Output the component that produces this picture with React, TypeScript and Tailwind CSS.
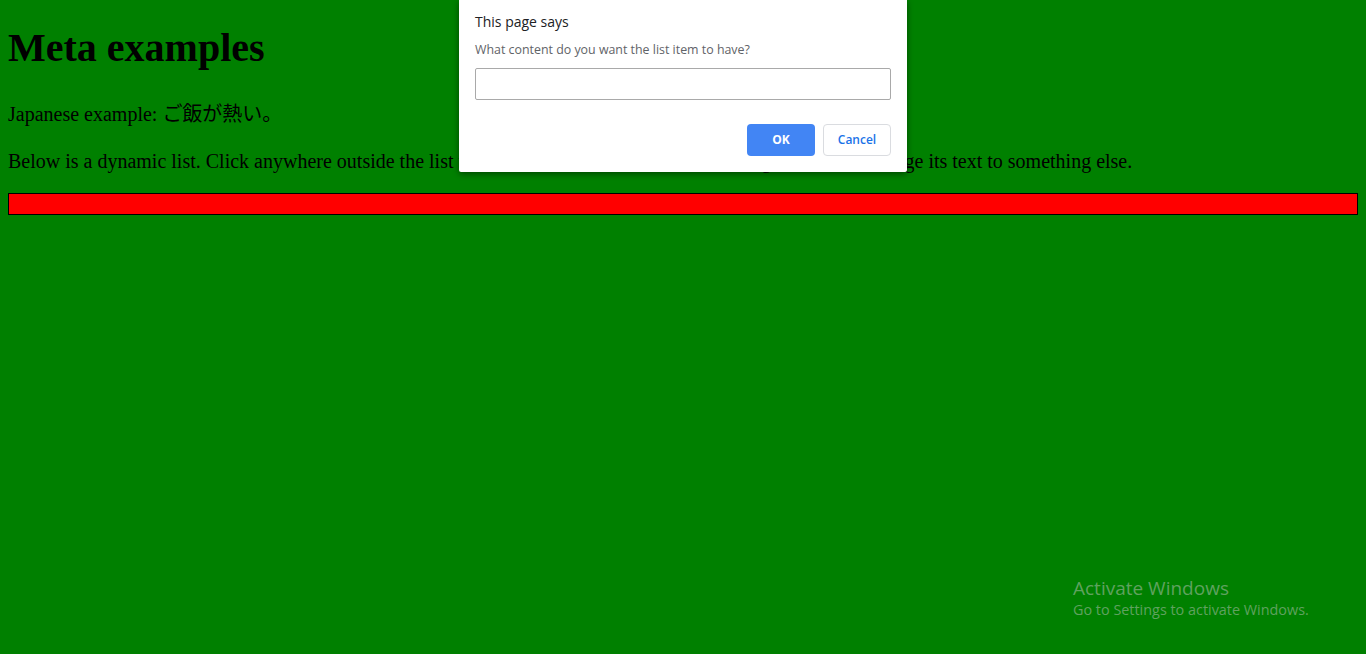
import React from "react";

const serif = { fontFamily: '"Liberation Serif", "Noto Sans CJK JP", serif' };

function PromptDialog() {
  return (
    <div
      className="absolute left-[459px] top-0 w-[448px] h-[172px] bg-white rounded-b-[2px] shadow-[0_2px_6px_rgba(0,0,0,0.45)] px-4 text-[#202124]"
      style={{ fontFamily: '"Open Sans", "Noto Sans", sans-serif' }}
    >
      <div className="pt-[12px] text-[14px] leading-[20px] text-[#202124]">This page says</div>
      <div className="mt-[10px] text-[12.4px] leading-[16px] text-[#5f6368]">
        What content do you want the list item to have?
      </div>
      <input
        className="mt-[10px] block w-[416px] h-[32px] border border-[#a9a9a9] rounded-[2px] outline-none px-2 text-[13px]"
        defaultValue=""
      />
      <div className="mt-[24px] flex justify-end gap-2">
        <button className="w-[68px] h-[32px] rounded-[4px] bg-[#4285f4] text-white text-[12px] font-bold">
          OK
        </button>
        <button className="w-[68px] h-[32px] rounded-[4px] border border-[#dadce0] bg-white text-[#1a73e8] text-[12px] font-semibold">
          Cancel
        </button>
      </div>
    </div>
  );
}

export default function App() {
  return (
    <div className="relative h-[654px] bg-[#008000] text-black px-2 pt-px overflow-hidden" style={serif}>
      <h1 className="text-[40px] font-bold leading-[46px] mt-[24px]">Meta examples</h1>
      <p className="text-[20px] leading-[23px] mt-[32px]">Japanese example: ご飯が熱い。</p>
      <p className="text-[20px] leading-[23px] mt-[24px]">
        Below is a dynamic list. Click anywhere outside the list to add a new item. Click on an existing list item to change its text to something else.
      </p>
      <ul className="mt-[20px] h-[22px] border border-black bg-[#ff0000]" />

      <PromptDialog />

      <div
        className="absolute left-[1073px] top-[576px] text-[#5fa25f]"
        style={{ fontFamily: '"Open Sans", "Noto Sans", sans-serif' }}
      >
        <div className="text-[19px] leading-[24px]">Activate Windows</div>
        <div className="text-[14.4px] leading-[20px]">Go to Settings to activate Windows.</div>
      </div>
    </div>
  );
}
